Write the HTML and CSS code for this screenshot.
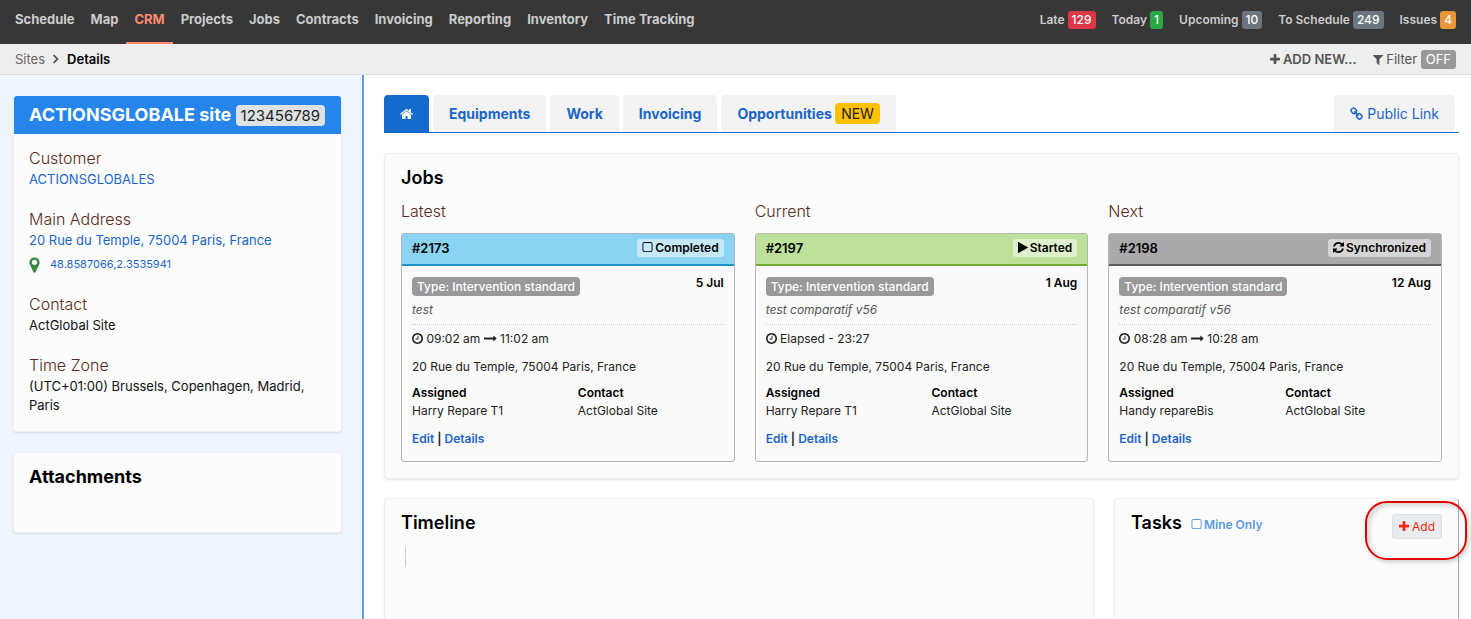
FILE: index.html
```html
<!DOCTYPE html>
<html lang="en">
<head>
    <meta charset="UTF-8">
    <meta name="viewport" content="width=device-width, initial-scale=1">
    <title>Site Details</title>
    <link rel="stylesheet" href="styles.css">
</head>
<body>
    <!-- icon set -->
    <svg class="sprite" aria-hidden="true">
        <symbol id="home" viewBox="64 0 1664 1792"><path d="M1472 992v480q0 26-19 45t-45 19h-384v-384h-256v384h-384q-26 0-45-19t-19-45v-480q0-1 .5-3t.5-3l575-474 575 474q1 2 1 6zm223-69l-62 74q-8 9-21 11h-3q-13 0-21-7l-692-577-692 577q-12 8-24 7-13-2-21-11l-62-74q-8-10-7-23.5t11-21.5l719-599q32-26 76-26t76 26l244 204v-195q0-14 9-23t23-9h192q14 0 23 9t9 23v408l219 182q10 8 11 21.5t-7 23.5z"/></symbol>
        <symbol id="plus" viewBox="192 0 1408 1792"><path d="M1600 736v192q0 40-28 68t-68 28h-416v416q0 40-28 68t-68 28h-192q-40 0-68-28t-28-68v-416h-416q-40 0-68-28t-28-68v-192q0-40 28-68t68-28h416v-416q0-40 28-68t68-28h192q40 0 68 28t28 68v416h416q40 0 68 28t28 68z"/></symbol>
        <symbol id="filter" viewBox="192 0 1408 1792"><path d="M1595 295q17 41-14 70l-493 493v742q0 42-39 59-13 5-25 5-27 0-45-19l-256-256q-19-19-19-45v-486l-493-493q-31-29-14-70 17-39 59-39h1280q42 0 59 39z"/></symbol>
        <symbol id="chevron" viewBox="384 0 1024 1792"><path d="M1250 896l-590 590-160-160 430-430-430-430 160-160z"/></symbol>
        <symbol id="marker" viewBox="384 0 1024 1792"><path d="M1152 640q0-106-75-181t-181-75-181 75-75 181 75 181 181 75 181-75 75-181zm256 0q0 109-33 179l-364 774q-16 33-47.5 52t-67.5 19-67.5-19-46.5-52l-365-774q-33-70-33-179 0-212 150-362t362-150 362 150 150 362z"/></symbol>
        <symbol id="clock" viewBox="128 0 1536 1792"><path d="M1024 544v448q0 14-9 23t-23 9h-320q-14 0-23-9t-9-23v-64q0-14 9-23t23-9h224v-352q0-14 9-23t23-9h64q14 0 23 9t9 23zm416 352q0-148-73-273t-198-198-273-73-273 73-198 198-73 273 73 273 198 198 273 73 273-73 198-198 73-273zm224 0q0 209-103 385.5t-279.5 279.5-385.5 103-385.5-103-279.5-279.5-103-385.5 103-385.5 279.5-279.5 385.5-103 385.5 103 279.5 279.5 103 385.5z"/></symbol>
        <symbol id="arrow" viewBox="0 0 1792 1792"><path d="M1728 893q0 14-10 24l-384 354q-16 14-35 6-19-9-19-29v-224h-1248q-14 0-23-9t-9-23v-192q0-14 9-23t23-9h1248v-224q0-21 19-29t35 5l384 350q10 10 10 23z"/></symbol>
        <symbol id="play" viewBox="192 0 1408 1792"><path d="M1576 927l-1328 738q-23 13-39.500 3t-16.500-36v-1472q0-26 16.500-36t39.500 3l1328 738q23 13 23 31t-23 31z"/></symbol>
        <symbol id="square" viewBox="128 0 1536 1792"><path d="M1312 256h-832q-66 0-113 47t-47 113v832q0 66 47 113t113 47h832q66 0 113-47t47-113v-832q0-66-47-113t-113-47zm288 160v832q0 119-84.500 203.500t-203.500 84.500h-832q-119 0-203.500-84.500t-84.500-203.500v-832q0-119 84.500-203.500t203.500-84.500h832q119 0 203.500 84.500t84.500 203.500z"/></symbol>
        <symbol id="refresh" viewBox="128 0 1536 1792"><path d="M1639 1056q0 5-1 7-64 268-268 434.500t-478 166.500q-146 0-282.500-55t-243.500-157l-129 129q-19 19-45 19t-45-19-19-45v-448q0-26 19-45t45-19h448q26 0 45 19t19 45-19 45l-137 137q71 66 161 102t187 36q134 0 250-65t186-179q11-17 53-117 8-23 30-23h192q13 0 22.500 9.500t9.500 22.500zm25-800v448q0 26-19 45t-45 19h-448q-26 0-45-19t-19-45 19-45l138-138q-148-137-349-137-134 0-250 65t-186 179q-11 17-53 117-8 23-30 23h-199q-13 0-22.500-9.500t-9.500-22.500v-7q65-268 270-434.500t480-166.500q146 0 284 55.500t245 156.500l130-129q19-19 45-19t45 19 19 45z"/></symbol>
        <symbol id="link" viewBox="64 0 1664 1792"><path d="M1520 1216q0-40-28-68l-208-208q-28-28-68-28-42 0-72 32 3 3 19 18.500t21.500 21.500 15 19 13 25.500 3.500 27.500q0 40-28 68t-68 28q-15 0-27.500-3.500t-25.500-13-19-15-21.500-21.500-18.500-19q-33 31-33 73 0 40 28 68l206 207q27 27 68 27 40 0 68-26l147-146q28-28 28-67zm-703-705q0-40-28-68l-206-207q-28-28-68-28-39 0-68 27l-147 146q-28 28-28 67 0 40 28 68l208 208q27 27 68 27 42 0 72-31-3-3-19-18.500t-21.500-21.500-15-19-13-25.500-3.500-27.500q0-40 28-68t68-28q15 0 27.500 3.500t25.500 13 19 15 21.500 21.500 18.500 19q33-31 33-73zm895 705q0 120-85 203l-147 146q-83 83-203 83-121 0-204-85l-206-207q-83-83-83-203 0-123 88-209l-88-88q-86 88-208 88-120 0-204-84l-208-208q-84-84-84-204t85-203l147-146q83-83 203-83 121 0 204 85l206 207q83 83 83 203 0 123-88 209l88 88q86-88 208-88 120 0 204 84l208 208q84 84 84 204z"/></symbol>
    </svg>

    <header class="navbar">
        <nav class="nav-links">
            <a href="#">Schedule</a>
            <a href="#">Map</a>
            <a href="#" class="active">CRM</a>
            <a href="#">Projects</a>
            <a href="#">Jobs</a>
            <a href="#">Contracts</a>
            <a href="#">Invoicing</a>
            <a href="#">Reporting</a>
            <a href="#">Inventory</a>
            <a href="#">Time Tracking</a>
        </nav>
        <nav class="nav-links nav-counts">
            <a href="#">Late <span class="count red">129</span></a>
            <a href="#">Today <span class="count green">1</span></a>
            <a href="#">Upcoming <span class="count">10</span></a>
            <a href="#">To Schedule <span class="count">249</span></a>
            <a href="#">Issues <span class="count orange">4</span></a>
        </nav>
    </header>

    <div class="subbar">
        <div class="breadcrumb">
            <a href="#">Sites</a>
            <svg class="icon chevron"><use href="#chevron"/></svg>
            <strong>Details</strong>
        </div>
        <div class="actions">
            <button type="button" class="add-new"><svg class="icon plus"><use href="#plus"/></svg> ADD NEW...</button>
            <button type="button"><svg class="icon plus"><use href="#filter"/></svg> Filter <span class="off">OFF</span></button>
        </div>
    </div>

    <div class="layout">
        <aside class="sidebar">
            <section class="card site">
                <h1>ACTIONSGLOBALE site <span class="site-code">123456789</span></h1>
                <div class="site-body">
                    <h2>Customer</h2>
                    <p><a href="#">ACTIONSGLOBALES</a></p>
                    <h2>Main Address</h2>
                    <p><a href="#">20 Rue du Temple, 75004 Paris, France</a></p>
                    <p class="coords"><svg class="icon marker"><use href="#marker"/></svg><a href="#">48.8587066,2.3535941</a></p>
                    <h2>Contact</h2>
                    <p>ActGlobal Site</p>
                    <h2>Time Zone</h2>
                    <p>(UTC+01:00) Brussels, Copenhagen, Madrid, Paris</p>
                </div>
            </section>
            <section class="card attachments">
                <h3>Attachments</h3>
            </section>
        </aside>

        <main class="content">
            <nav class="tabs">
                <a href="#" class="tab current" aria-label="Home"><svg class="icon home"><use href="#home"/></svg></a>
                <a href="#" class="tab">Equipments</a>
                <a href="#" class="tab">Work</a>
                <a href="#" class="tab">Invoicing</a>
                <a href="#" class="tab">Opportunities <span class="new">NEW</span></a>
                <a href="#" class="tab public"><svg class="icon home"><use href="#link"/></svg> Public Link</a>
            </nav>

            <section class="card jobs">
                <h3>Jobs</h3>
                <div class="job-grid">
                    <div>
                        <h2>Latest</h2>
                        <article class="job completed">
                            <header><strong>#2173</strong><span class="status"><svg class="icon"><use href="#square"/></svg>Completed</span></header>
                            <div class="job-body">
                                <div class="job-top"><span class="type">Type: Intervention standard</span><strong>5 Jul</strong></div>
                                <p class="note">test</p>
                                <p class="time"><svg class="icon"><use href="#clock"/></svg> 09:02 am <svg class="icon arrow"><use href="#arrow"/></svg> 11:02 am</p>
                                <p class="address">20 Rue du Temple, 75004 Paris, France</p>
                                <div class="people">
                                    <div><strong>Assigned</strong><br>Harry Repare T1</div>
                                    <div><strong>Contact</strong><br>ActGlobal Site</div>
                                </div>
                                <p class="job-links"><a href="#">Edit</a> | <a href="#">Details</a></p>
                            </div>
                        </article>
                    </div>
                    <div>
                        <h2>Current</h2>
                        <article class="job started">
                            <header><strong>#2197</strong><span class="status"><svg class="icon plus"><use href="#play"/></svg>Started</span></header>
                            <div class="job-body">
                                <div class="job-top"><span class="type">Type: Intervention standard</span><strong>1 Aug</strong></div>
                                <p class="note">test comparatif v56</p>
                                <p class="time"><svg class="icon"><use href="#clock"/></svg> Elapsed - 23:27</p>
                                <p class="address">20 Rue du Temple, 75004 Paris, France</p>
                                <div class="people">
                                    <div><strong>Assigned</strong><br>Harry Repare T1</div>
                                    <div><strong>Contact</strong><br>ActGlobal Site</div>
                                </div>
                                <p class="job-links"><a href="#">Edit</a> | <a href="#">Details</a></p>
                            </div>
                        </article>
                    </div>
                    <div>
                        <h2>Next</h2>
                        <article class="job synchronized">
                            <header><strong>#2198</strong><span class="status"><svg class="icon"><use href="#refresh"/></svg>Synchronized</span></header>
                            <div class="job-body">
                                <div class="job-top"><span class="type">Type: Intervention standard</span><strong>12 Aug</strong></div>
                                <p class="note">test comparatif v56</p>
                                <p class="time"><svg class="icon"><use href="#clock"/></svg> 08:28 am <svg class="icon arrow"><use href="#arrow"/></svg> 10:28 am</p>
                                <p class="address">20 Rue du Temple, 75004 Paris, France</p>
                                <div class="people">
                                    <div><strong>Assigned</strong><br>Handy repareBis</div>
                                    <div><strong>Contact</strong><br>ActGlobal Site</div>
                                </div>
                                <p class="job-links"><a href="#">Edit</a> | <a href="#">Details</a></p>
                            </div>
                        </article>
                    </div>
                </div>
            </section>

            <div class="bottom-row">
                <section class="card timeline">
                    <h3>Timeline</h3>
                    <div class="timeline-line"></div>
                </section>
                <section class="card tasks">
                    <h3>Tasks</h3>
                    <button type="button" class="mine"><svg class="icon"><use href="#square"/></svg>Mine Only</button>
                    <button type="button" class="add"><svg class="icon plus"><use href="#plus"/></svg> Add</button>
                    <div class="highlight"></div>
                </section>
            </div>
        </main>
    </div>
</body>
</html>
```
FILE: styles.css
```css
* {
    box-sizing: border-box;
}

body {
    margin: 0;
    min-height: 100vh;
    display: flex;
    flex-direction: column;
    font-family: Inter, "Liberation Sans", sans-serif;
    font-size: 13px;
    line-height: 19px;
    color: #111;
    background: #fff;
}

h1, h2, h3, p {
    margin: 0;
}

a {
    color: #1b65c9;
    text-decoration: none;
}

strong {
    font-weight: 600;
    color: #000;
}

button {
    padding: 0;
    border: 0;
    background: none;
    font: inherit;
    color: inherit;
    cursor: pointer;
}

.sprite {
    position: absolute;
    width: 0;
    height: 0;
}

.icon {
    width: 11px;
    height: 13px;
    fill: currentColor;
    vertical-align: -2px;
}

.icon.plus {
    width: 10px;
}

.icon.chevron {
    width: 8px;
    height: 14px;
}

.icon.home {
    width: 13px;
    height: 14px;
}

.icon.marker {
    width: 11px;
    height: 18px;
    color: #3f8a46;
}

.icon.arrow {
    width: 13px;
}

/* top bar */

.navbar {
    display: flex;
    justify-content: space-between;
    height: 44px;
    padding: 0 7px;
    background: #373737;
}

.nav-links {
    display: flex;
}

.nav-links a {
    padding: 10px 8px 0;
    border-bottom: 2px solid transparent;
    font-weight: 700;
    color: #ccc;
    white-space: nowrap;
}

.nav-links .active {
    color: #ff8a70;
    border-color: #ff8a70;
}

.nav-counts a {
    font-size: 12px;
    font-weight: 600;
}

.count {
    display: inline-block;
    padding: 0 4px;
    border-radius: 3px;
    line-height: 18px;
    font-weight: 500;
    color: #fff;
    background: #6c757d;
}

.count.red {
    background: #dc3545;
}

.count.green {
    background: #28a745;
}

.count.orange {
    background: #e8963a;
}

.subbar {
    display: flex;
    justify-content: space-between;
    align-items: center;
    height: 31px;
    padding: 0 15px;
    background: #eee;
    border-bottom: 1px solid #ddd;
    color: #555;
}

.breadcrumb {
    display: flex;
    align-items: center;
    gap: 7px;
}

.breadcrumb a {
    color: #666;
}

.actions {
    display: flex;
    gap: 16px;
}

.add-new {
    font-weight: 600;
}

.off {
    display: inline-block;
    padding: 0 5px;
    border-radius: 3px;
    background: #999;
    color: #fff;
}

/* page */

.layout {
    flex: 1;
    display: flex;
}

.sidebar {
    flex: 0 0 364px;
    padding: 21px 20px 0 13px;
    background: #eef5fe;
    border-right: 2px solid #569fea;
}

.content {
    flex: 1;
    display: flex;
    flex-direction: column;
    padding: 20px 12px 0 20px;
}

.card {
    border: 1px solid #f0f0f0;
    border-radius: 4px;
    background: #fcfcfc;
    box-shadow: 0 1px 2px rgba(0, 0, 0, 0.1);
}

h2 {
    font-size: 16px;
    line-height: 22px;
    font-weight: 300;
    color: #5a2a20;
}

h3 {
    font-size: 18px;
    line-height: 24px;
    font-weight: 600;
    color: #000;
}

.site {
    margin-bottom: 20px;
    border-top: 0;
}

.site h1 {
    padding: 7px 15px;
    border-radius: 3px 3px 0 0;
    font-size: 18px;
    line-height: 24px;
    font-weight: 700;
    color: #fff;
    background: #2585eb;
    white-space: nowrap;
}

.site-code {
    display: inline-block;
    padding: 0 5px;
    border-radius: 4px;
    font-size: 15px;
    line-height: 21px;
    font-weight: 400;
    color: #222;
    background: #dee2e6;
}

.site-body {
    padding: 13px 15px 16px;
}

.site-body h2 {
    margin-bottom: 1px;
}

.site-body p + h2 {
    margin-top: 19px;
}

.coords {
    display: flex;
    align-items: center;
    gap: 10px;
    margin-top: 5px;
    font-size: 11px;
}

.attachments {
    height: 81px;
    padding: 12px 15px;
}

.attachments h3 {
    font-weight: 700;
}

.tabs {
    display: flex;
    gap: 4px;
    margin-bottom: 20px;
    border-bottom: 1px solid #146bcc;
}

.tab {
    padding: 8px 16px 7px;
    border-radius: 4px 4px 0 0;
    font-size: 14px;
    line-height: 22px;
    font-weight: 700;
    background: #f3f3f3;
    white-space: nowrap;
}

.tab.current {
    color: #fff;
    background: #146bcc;
}

.tab.public {
    margin: 0 4px 0 auto;
    font-weight: 400;
}

.new {
    display: inline-block;
    padding: 0 6px;
    border-radius: 4px;
    line-height: 21px;
    font-weight: 400;
    color: #222;
    background: #ffc107;
}

/* jobs */

.jobs {
    padding: 12px 16px 16px;
}

.job-grid {
    display: grid;
    grid-template-columns: repeat(3, 1fr);
    gap: 20px;
    margin-top: 10px;
}

.job {
    margin-top: 11px;
    border: 1px solid #b5b5b5;
    border-radius: 3px;
    background: #fafafa;
    font-size: 12px;
    line-height: 18px;
    color: #222;
}

.job header {
    display: flex;
    justify-content: space-between;
    align-items: center;
    height: 32px;
    padding: 0 10px 2px;
    border-bottom: 2px solid;
    font-size: 13px;
}

.completed header {
    background: #8ad3f3;
    border-color: #1b96cc;
}

.started header {
    background: #bde19a;
    border-color: #70ad35;
}

.synchronized header {
    background: #aaa;
    border-color: #5c5c5c;
}

.status {
    padding: 0 5px;
    border-radius: 3px;
    font-size: 12px;
    font-weight: 600;
    color: #000;
    background: rgba(255, 255, 255, 0.5);
}

.status .icon {
    margin-right: 2px;
}

.job-body {
    padding: 9px 10px 13px;
}

.job-top {
    display: flex;
    justify-content: space-between;
    line-height: 16px;
}

.type {
    margin-top: 2px;
    padding: 0 5px;
    border-radius: 4px;
    line-height: 19px;
    font-weight: 500;
    color: #fff;
    background: #999;
}

.note {
    padding: 5px 0;
    border-bottom: 1px dotted #ccc;
    font-style: italic;
    color: #555;
}

.time {
    margin-top: 5px;
}

.address {
    margin: 10px 0 8px;
}

.people {
    display: grid;
    grid-template-columns: 1fr 1fr;
    gap: 20px;
    margin-bottom: 10px;
}

.job-links,
.job-links a {
    font-weight: 600;
}

/* timeline and tasks */

.bottom-row {
    flex: 1;
    display: grid;
    grid-template-columns: repeat(12, 1fr);
    column-gap: 20px;
    margin-top: 19px;
}

.timeline,
.tasks {
    padding: 12px 16px;
    border-bottom: 0;
    border-radius: 4px 4px 0 0;
}

.timeline {
    grid-column: span 8;
}

.timeline-line {
    width: 1px;
    height: 20px;
    margin: 12px 4px;
    background: #ccc;
}

.tasks {
    position: relative;
    grid-column: span 4;
    display: flex;
    align-items: flex-start;
    border-right-color: #aaa;
}

.mine {
    margin: 4px 0 0 9px;
    font-size: 12px;
    font-weight: 600;
    color: #5b9ade;
}

.mine .icon {
    margin-right: 2px;
}

.add {
    margin: 3px 0 0 auto;
    padding: 3px 6px;
    border: 1px solid #dee2e6;
    border-radius: 3px;
    font-size: 12px;
    line-height: 17px;
    color: #f22613;
    background: #e9ecef;
}

/* callout drawn over the Add button */
.highlight {
    position: absolute;
    top: 2px;
    right: -9px;
    width: 102px;
    height: 59px;
    border: 2px solid #e60000;
    border-radius: 22px;
    box-shadow: 2px 2px 5px rgba(0, 0, 0, 0.2), inset 3px 3px 5px rgba(0, 0, 0, 0.15);
    pointer-events: none;
}
```
